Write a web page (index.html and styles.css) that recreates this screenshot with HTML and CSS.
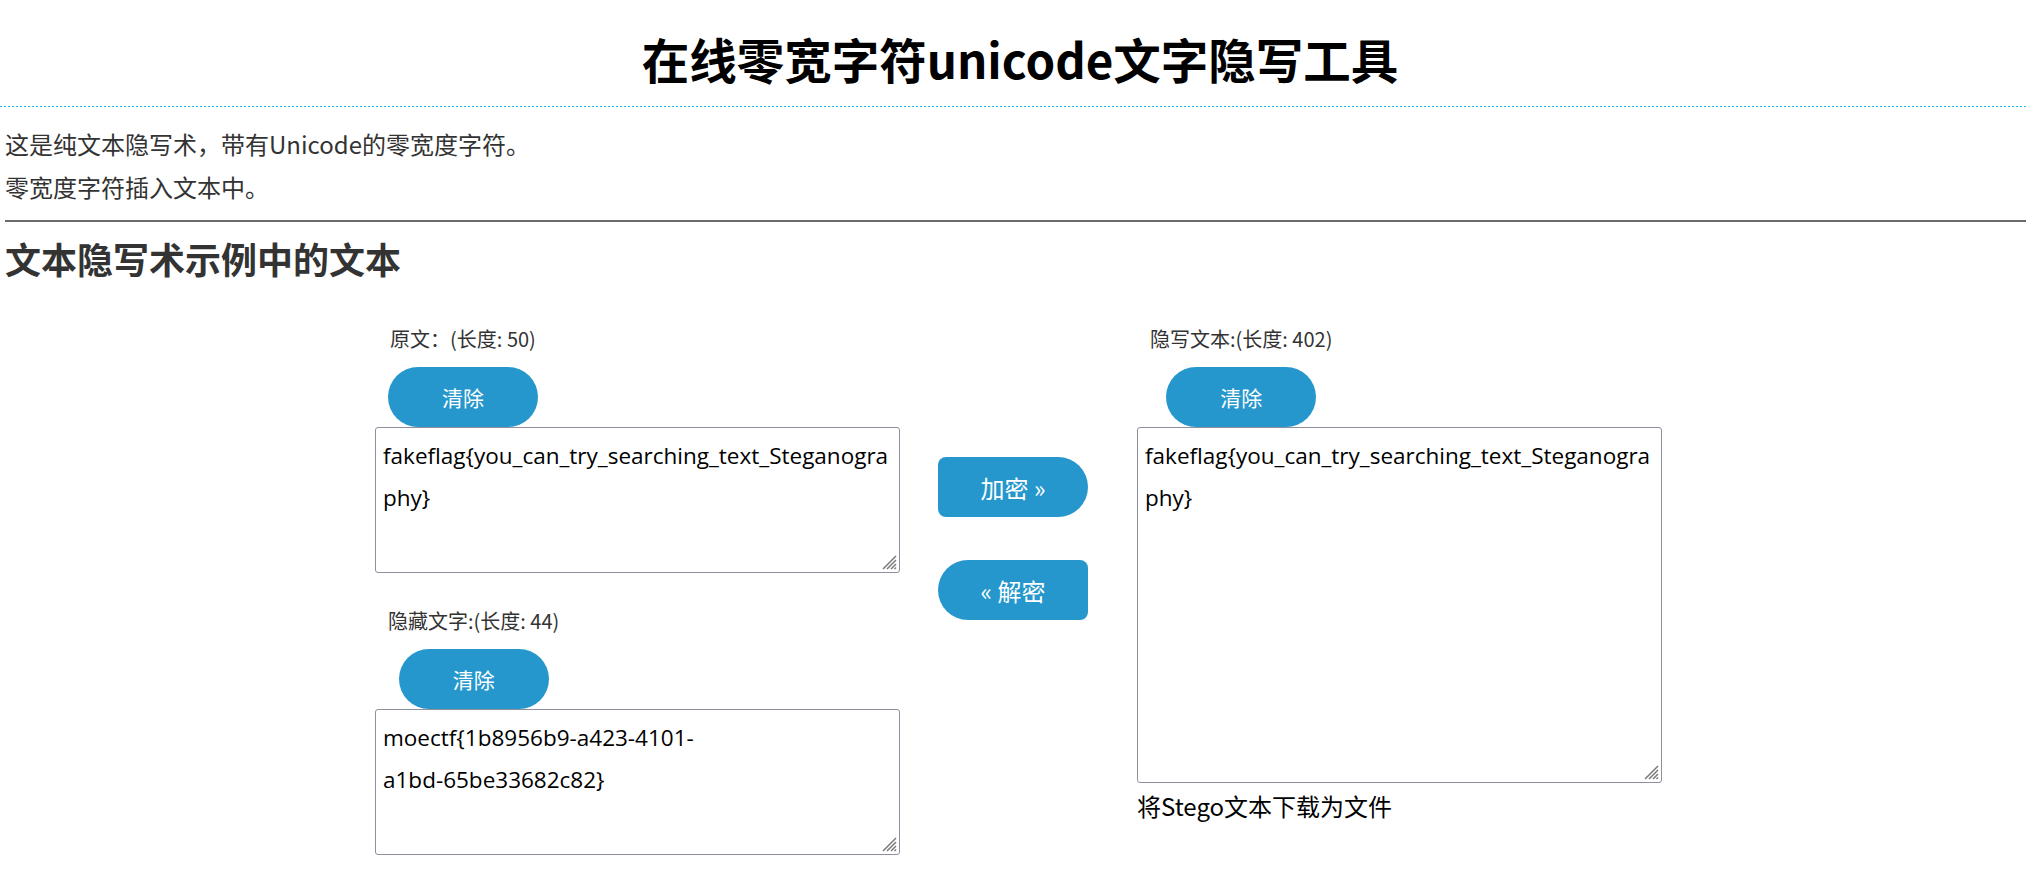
FILE: index.html
```html
<!DOCTYPE html>
<html lang="zh-CN">
<head>
<meta charset="utf-8">
<title>在线零宽字符unicode文字隐写工具</title>
<link rel="stylesheet" href="styles.css">
</head>
<body>
<header class="site-header">
  <h1 class="title">在线零宽字符unicode文字隐写工具</h1>
</header>
<section class="intro">
  <p>这是纯文本隐写术，带有Unicode的零宽度字符。</p>
  <p>零宽度字符插入文本中。</p>
</section>
<hr class="rule">
<h2 class="section-title">文本隐写术示例中的文本</h2>
<div class="workspace">
  <div class="col col-side">
    <div class="field-head">
      <div class="label">原文：(长度: 50)</div>
      <button class="btn-clear" type="button">清除</button>
    </div>
    <div class="ta-wrap">
      <textarea class="ta ta-small" spellcheck="false">fakeflag{you_can_try_searching_text_Steganography}</textarea>
      <svg class="grip" viewBox="0 0 16 16" width="16" height="16"><path d="M2 15L15 2M6 15L15 6M10 15L15 10M13.5 15L15 13.5" stroke="#7a7a7a" stroke-width="1.5" fill="none"/></svg>
    </div>
    <div class="field-head field-head-second">
      <div class="label">隐藏文字:(长度: 44)</div>
      <button class="btn-clear" type="button">清除</button>
    </div>
    <div class="ta-wrap">
      <textarea class="ta ta-small" spellcheck="false">moectf{1b8956b9-a423-4101-a1bd-&#8288;65be33682c82}</textarea>
      <svg class="grip" viewBox="0 0 16 16" width="16" height="16"><path d="M2 15L15 2M6 15L15 6M10 15L15 10M13.5 15L15 13.5" stroke="#7a7a7a" stroke-width="1.5" fill="none"/></svg>
    </div>
  </div>
  <div class="col col-mid">
    <button class="btn-act btn-enc" type="button">加密 »</button>
    <button class="btn-act btn-dec" type="button">« 解密</button>
  </div>
  <div class="col col-side">
    <div class="field-head">
      <div class="label">隐写文本:(长度: 402)</div>
      <button class="btn-clear" type="button">清除</button>
    </div>
    <div class="ta-wrap">
      <textarea class="ta ta-large" spellcheck="false">fakeflag{you_can_try_searching_text_Steganography}</textarea>
      <svg class="grip" viewBox="0 0 16 16" width="16" height="16"><path d="M2 15L15 2M6 15L15 6M10 15L15 10M13.5 15L15 13.5" stroke="#7a7a7a" stroke-width="1.5" fill="none"/></svg>
    </div>
    <a class="download" href="#">将Stego文本下载为文件</a>
  </div>
</div>
</body>
</html>
```

FILE: styles.css
```css
html, body {
  margin: 0;
  padding: 0;
  background: #ffffff;
}

body {
  font-family: "Noto Sans CJK SC", "Microsoft YaHei", sans-serif;
  font-size: 24px;
  color: #333333;
}

.site-header {
  box-sizing: border-box;
  height: 107px;
  padding-left: 14px;
  text-align: center;
  background-image: repeating-linear-gradient(90deg, #1bbdf0 0 2px, transparent 2px 4px);
  background-size: 100% 1px;
  background-position: left bottom;
  background-repeat: no-repeat;
}

.title {
  margin: 0;
  padding-top: 28px;
  font-size: 47.5px;
  line-height: 62px;
  font-weight: 700;
  color: #000000;
}

.intro {
  padding: 15px 5px 0;
}

.intro p {
  margin: 0;
  line-height: 43px;
}

.rule {
  margin: 12px 0 0 5px;
  border: 0;
  border-top: 2px solid #6a6a6a;
  height: 0;
}

.section-title {
  margin: 12px 0 0 5px;
  font-size: 36px;
  line-height: 48px;
  font-weight: 700;
  color: #333333;
}

.workspace {
  display: flex;
  justify-content: center;
  align-items: flex-start;
  margin-top: 39px;
  padding-left: 11px;
}

.col {
  display: flex;
  flex-direction: column;
  align-items: flex-start;
}

.col-side {
  width: 525px;
}

.col-mid {
  width: 150px;
  margin: 136px 49px 0 38px;
  gap: 43px;
}

.field-head {
  display: inline-flex;
  flex-direction: column;
  align-items: center;
  margin-left: 13px;
}

.field-head-second {
  margin-top: 30px;
}

.label {
  font-size: 20px;
  line-height: 36px;
  color: #333333;
  white-space: nowrap;
  margin-bottom: 10px;
}

.btn-clear {
  width: 150px;
  height: 60px;
  border: 0;
  border-radius: 30px;
  background: #2697cc;
  color: #ffffff;
  font-family: inherit;
  font-size: 21px;
  padding: 0;
  cursor: pointer;
}

.btn-act {
  width: 150px;
  height: 60px;
  border: 0;
  background: #2697cc;
  color: #ffffff;
  font-family: inherit;
  font-size: 24px;
  padding: 0;
  cursor: pointer;
}

.btn-enc {
  border-radius: 8px 30px 30px 8px;
}

.btn-dec {
  border-radius: 30px 8px 8px 30px;
}

.ta-wrap {
  position: relative;
  width: 525px;
}

.ta {
  display: block;
  box-sizing: border-box;
  width: 100%;
  margin: 0;
  padding: 7px 5px 5px 7px;
  border: 1px solid #8f8f9d;
  border-radius: 3px;
  background: #ffffff;
  color: #000000;
  font-family: "Open Sans", "Noto Sans CJK SC", sans-serif;
  font-size: 22.5px;
  line-height: 42px;
  resize: none;
  overflow: hidden;
}

.ta-small {
  height: 146px;
}

.ta-large {
  height: 356px;
}

.grip {
  position: absolute;
  right: 3px;
  bottom: 3px;
  pointer-events: none;
}

.download {
  margin-top: 7px;
  font-size: 24px;
  line-height: 32px;
  color: #000000;
  text-decoration: none;
}
```
